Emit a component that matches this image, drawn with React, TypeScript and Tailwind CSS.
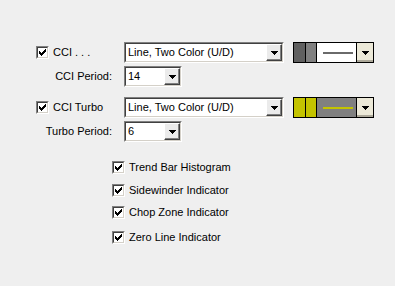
import React from "react";

const CheckMark = () => (
  <svg width="7" height="7" viewBox="0 0 7 7" shapeRendering="crispEdges">
    <path
      d="M6 0h1v1h-1z M5 1h2v1h-2z M0 2h1v1h-1z M4 2h3v1h-3z M0 3h2v1h-2z M3 3h3v1h-3z M0 4h5v1h-5z M1 5h3v1h-3z M2 6h1v1h-1z"
      fill="#000"
    />
  </svg>
);

const Arrow = () => (
  <svg width="7" height="4" viewBox="0 0 7 4" shapeRendering="crispEdges">
    <path d="M0 0h7v1h-7z M1 1h5v1h-5z M2 2h3v1h-3z M3 3h1v1h-1z" fill="#000" />
  </svg>
);

// classic sunken checkbox, 13x13
const Check = () => (
  <div className="w-[13px] h-[13px] shrink-0 border border-t-[#808080] border-l-[#808080] border-b-white border-r-white">
    <div className="w-full h-full bg-white border border-t-[#404040] border-l-[#404040] border-b-[#d4d0c8] border-r-[#d4d0c8] flex items-center justify-center">
      <CheckMark />
    </div>
  </div>
);

const Combo = ({ value, width }: { value: string; width: string }) => (
  <div className={`${width} h-[21px] border border-t-[#808080] border-l-[#808080] border-b-white border-r-white`}>
    <div className="h-full bg-white border border-t-[#404040] border-l-[#404040] border-b-[#d4d0c8] border-r-[#d4d0c8] flex items-center">
      <span className="flex-1 pl-[2px] truncate">{value}</span>
      <div className="w-[16px] h-full bg-[#ebebeb] border border-t-white border-l-white border-b-[#404040] border-r-[#404040] shadow-[inset_-1px_-1px_0_#808080] flex items-center justify-center">
        <Arrow />
      </div>
    </div>
  </div>
);

const ColorPicker = ({ c1, c2, area, line }: { c1: string; c2: string; area: string; line: string }) => (
  <div className="ml-[9px] w-[81px] h-[21px] border border-black flex">
    <div className={`w-[11px] ${c1}`} />
    <div className="w-px bg-black" />
    <div className={`w-[10px] ${c2}`} />
    <div className="w-px bg-black" />
    <div className={`flex-1 ${area} flex items-center pl-[6px] pr-[3px]`}>
      <div className={`w-full h-[2px] ${line}`} />
    </div>
    <div className="w-px bg-black" />
    <div className="w-[16px] bg-[#ece9d8] shadow-[inset_0_-2px_0_#aca899] flex items-center justify-center">
      <Arrow />
    </div>
  </div>
);

const options = [
  { label: "Trend Bar Histogram", mt: "mt-[19px]" },
  { label: "Sidewinder Indicator", mt: "mt-[10px]" },
  { label: "Chop Zone Indicator", mt: "mt-[9px]" },
  { label: "Zero Line Indicator", mt: "mt-[12px]" },
];

export default function App() {
  return (
    <div
      className="w-[395px] h-[286px] bg-[#efefef] text-[11px] text-black pt-[42px]"
      style={{ fontFamily: '"Liberation Sans", Arial, sans-serif' }}
    >
      {/* CCI */}
      <div className="flex items-center h-[21px]">
        <div className="w-[124px] pl-[36px] flex items-center gap-[4px]">
          <Check />
          <span>CCI . . .</span>
        </div>
        <Combo value="Line, Two Color (U/D)" width="w-[160px]" />
        <ColorPicker c1="bg-[#606060]" c2="bg-[#808080]" area="bg-white" line="bg-[#6a6a6a]" />
      </div>
      <div className="flex items-center h-[21px] mt-[3px]">
        <div className="w-[124px] pr-[12px] text-right">CCI Period:</div>
        <Combo value="14" width="w-[58px]" />
      </div>

      {/* CCI Turbo */}
      <div className="flex items-center h-[21px] mt-[10px]">
        <div className="w-[124px] pl-[36px] flex items-center gap-[4px]">
          <Check />
          <span>CCI Turbo</span>
        </div>
        <Combo value="Line, Two Color (U/D)" width="w-[160px]" />
        <ColorPicker c1="bg-[#c4c400]" c2="bg-[#c4c400]" area="bg-[#808080]" line="bg-[#c4c400]" />
      </div>
      <div className="flex items-center h-[21px] mt-[3px]">
        <div className="w-[124px] pr-[12px] text-right">Turbo Period:</div>
        <Combo value="6" width="w-[58px]" />
      </div>

      {/* indicator options */}
      <div className="pl-[112px]">
        {options.map((o) => (
          <div key={o.label} className={`flex items-center gap-[4px] h-[13px] ${o.mt}`}>
            <Check />
            <span>{o.label}</span>
          </div>
        ))}
      </div>
    </div>
  );
}
